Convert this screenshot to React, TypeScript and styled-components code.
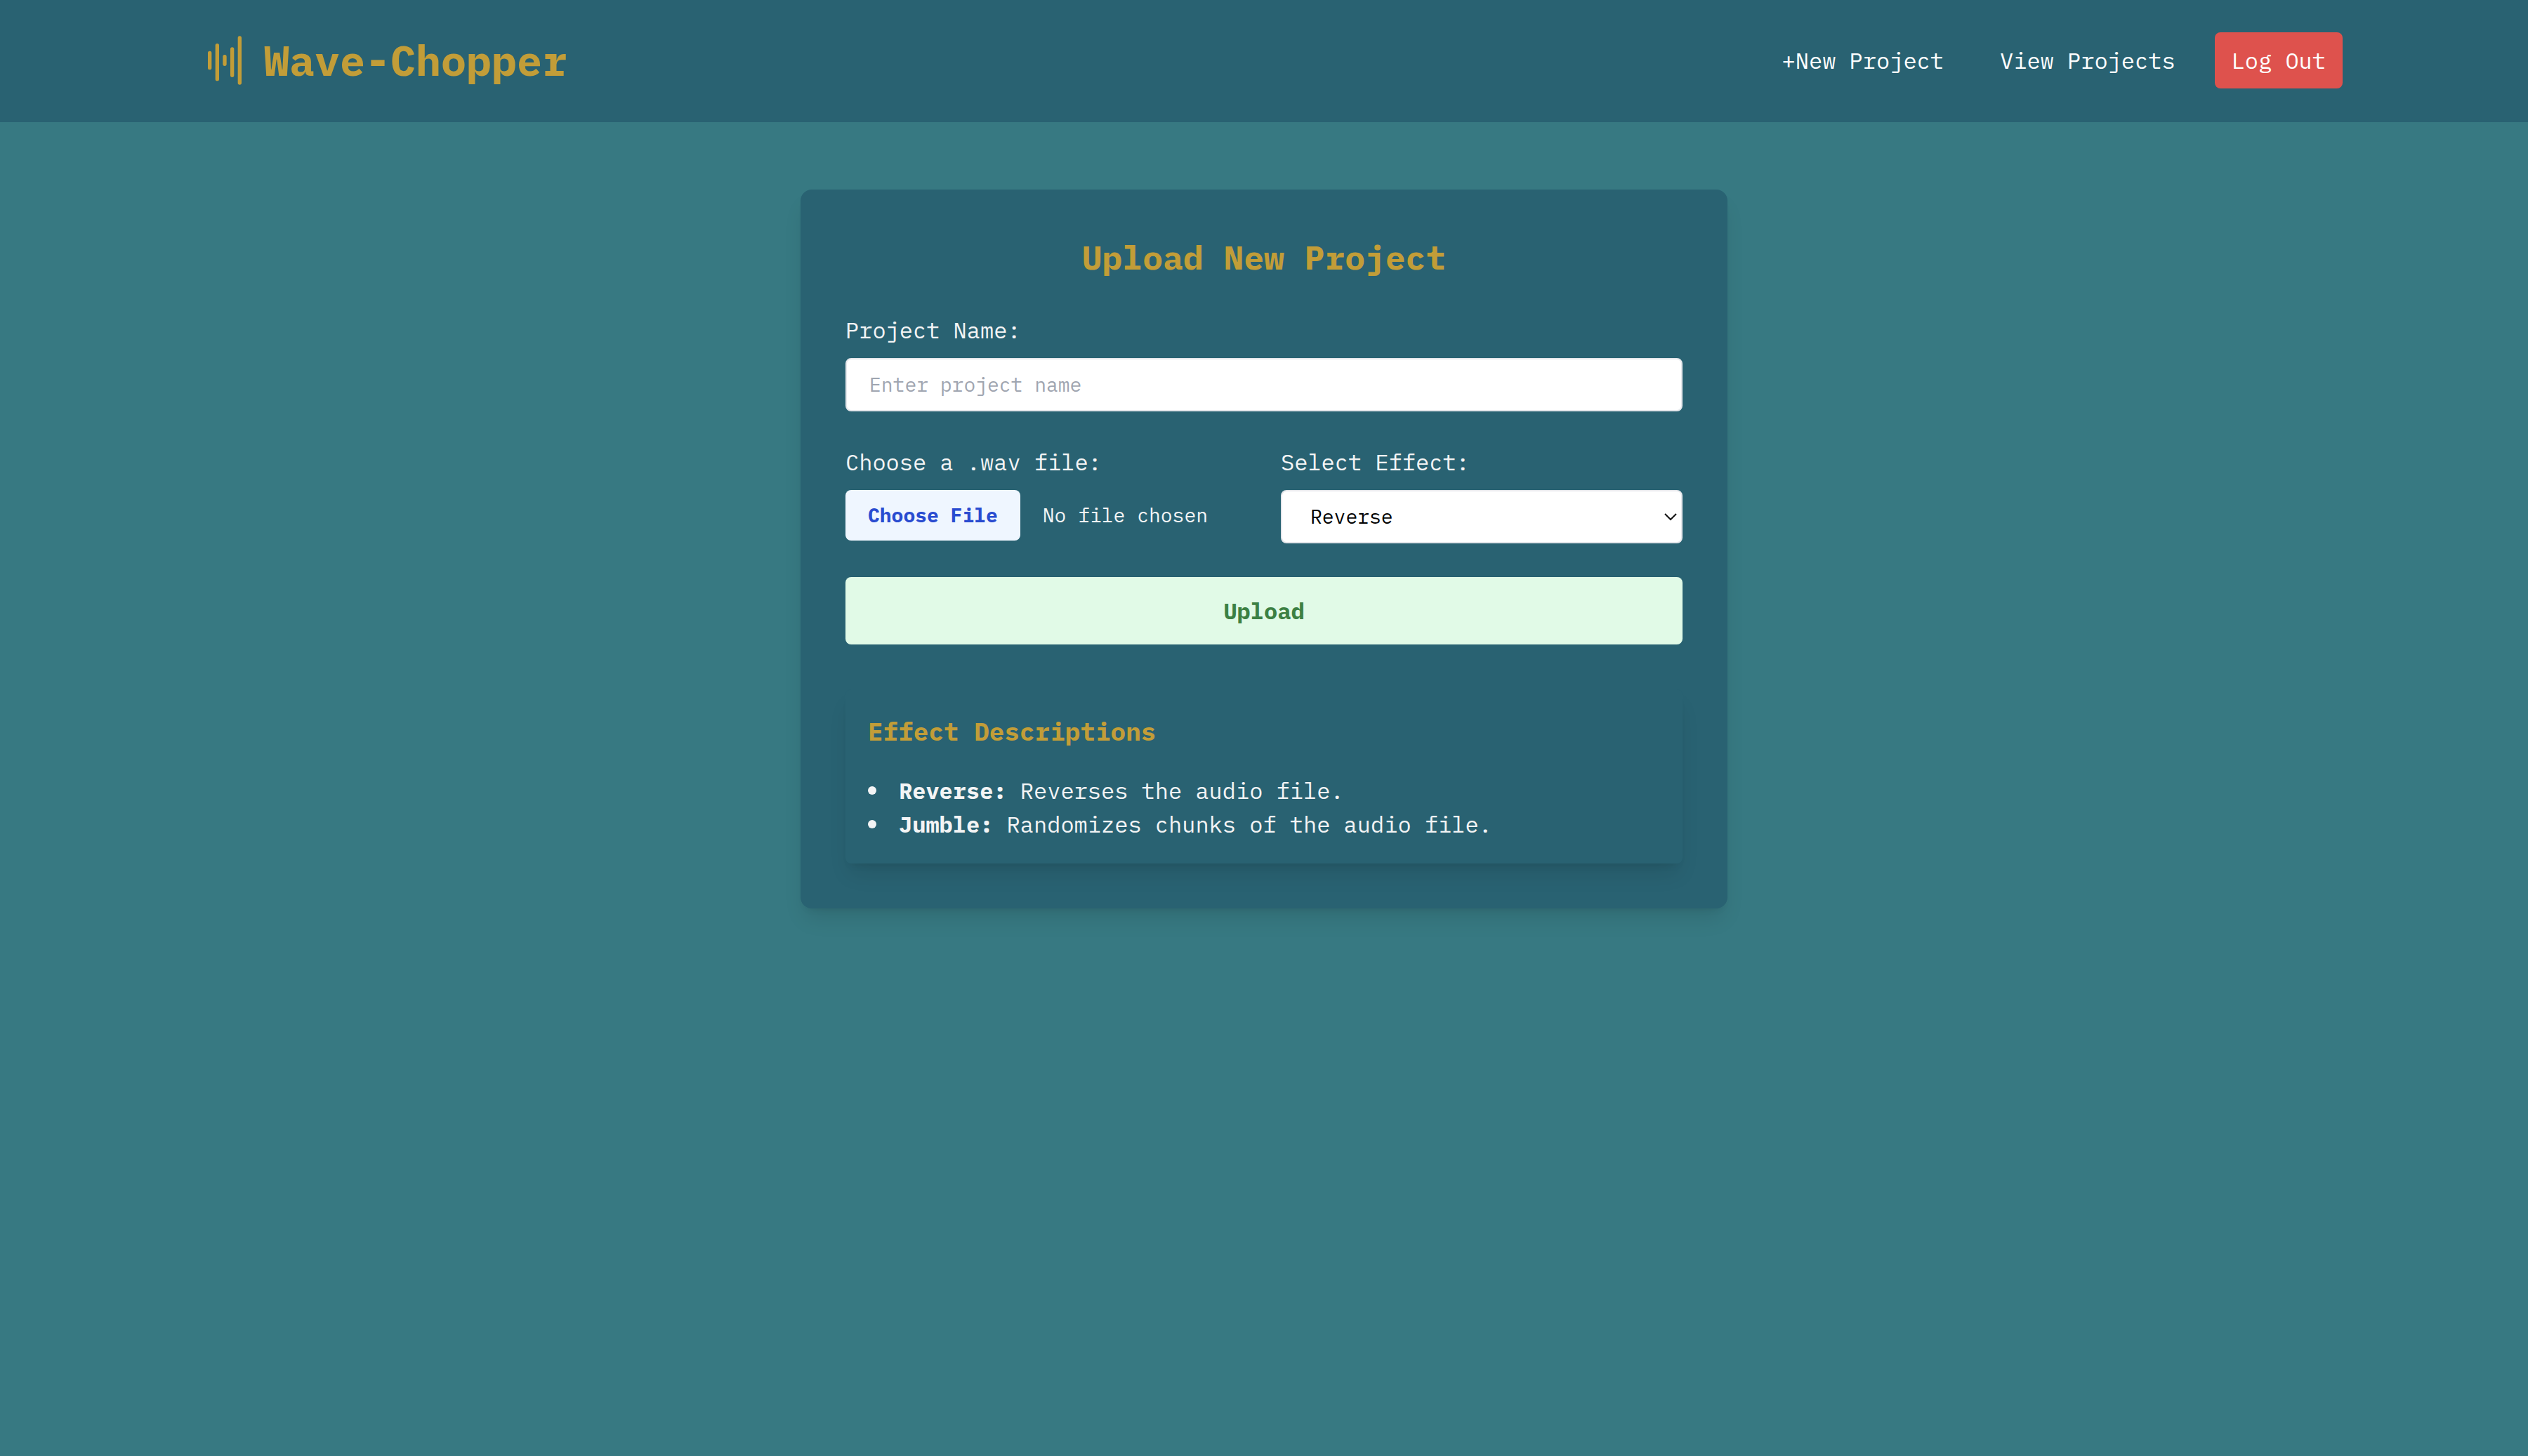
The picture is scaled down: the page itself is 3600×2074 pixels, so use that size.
import React, { useState } from "react";
import styled, { createGlobalStyle, ThemeProvider } from "styled-components";

const theme = {
  page: "#377982",
  panel: "#296272",
  gold: "#c29d38",
  text: "#f3f4f5",
  danger: "#de524d",
  border: "#e5e7eb",
};

const elevation =
  "0 20px 30px -6px rgba(0, 0, 0, 0.1), 0 8px 12px -8px rgba(0, 0, 0, 0.1)";

const GlobalStyle = createGlobalStyle`
  *, *::before, *::after {
    box-sizing: border-box;
  }
  body {
    margin: 0;
    min-height: 100vh;
    background: ${theme.page};
    color: ${theme.text};
    font-family: "IBM Plex Mono", "Liberation Mono", monospace;
    font-size: 32px;
    line-height: 48px;
  }
  h1, h2, h3, ul {
    margin: 0;
    padding: 0;
  }
  button, input, select {
    margin: 0;
    font: inherit;
  }
`;

const Header = styled.header`
  background: ${(p) => p.theme.panel};
  padding: 46px 0 48px;
`;

const HeaderInner = styled.div`
  display: flex;
  align-items: center;
  justify-content: space-between;
  width: 100%;
  max-width: 3072px;
  margin: 0 auto;
`;

const Brand = styled.a`
  display: flex;
  align-items: center;
  gap: 24px;
  padding-left: 24px;
  color: ${(p) => p.theme.gold};
  text-decoration: none;
`;

const BrandMark = styled.svg`
  width: 64px;
  height: 64px;
  overflow: visible;
`;

const BrandName = styled.h1`
  font-size: 60px;
  line-height: 72px;
  font-weight: 700;
`;

const Nav = styled.nav`
  display: flex;
  align-items: center;
  gap: 32px;
`;

const NavLink = styled.a`
  padding: 16px 24px;
  color: #fff;
  text-decoration: none;
`;

const LogOut = styled.button`
  padding: 16px 24px;
  border: 0;
  border-radius: 8px;
  background: ${(p) => p.theme.danger};
  color: #fff;
  cursor: pointer;
`;

const Card = styled.main`
  width: 100%;
  max-width: 1320px;
  margin: 96px auto;
  padding: 64px;
  border-radius: 16px;
  background: ${(p) => p.theme.panel};
  box-shadow: ${elevation};
`;

const CardTitle = styled.h2`
  margin-bottom: 48px;
  color: ${(p) => p.theme.gold};
  font-size: 48px;
  line-height: 64px;
  font-weight: 700;
  text-align: center;
`;

const Form = styled.form`
  display: flex;
  flex-direction: column;
  gap: 48px;
`;

const FieldRow = styled.div`
  display: grid;
  grid-template-columns: 1fr 1fr;
  gap: 48px;
`;

const Field = styled.div`
  display: flex;
  flex-direction: column;
  gap: 16px;
  min-width: 0;
`;

const TextInput = styled.input`
  width: 100%;
  padding: 16px 32px;
  border: 2px solid ${(p) => p.theme.border};
  border-radius: 8px;
  background: #fff;
  color: #000;
  font-size: 28px;
  line-height: 40px;
  &::placeholder {
    color: #9fa5b0;
    opacity: 1;
  }
`;

const FileInput = styled.input`
  width: 100%;
  color: ${(p) => p.theme.text};
  font-size: 28px;
  line-height: 40px;
  &::file-selector-button {
    margin-right: 32px;
    padding: 16px 32px;
    border: 0;
    border-radius: 8px;
    background: #eff6ff;
    color: #294bd0;
    font: inherit;
    font-weight: 700;
  }
`;

const SelectBox = styled.div`
  display: grid;
  align-items: center;
  > * {
    grid-area: 1 / 1;
  }
`;

const Select = styled.select`
  appearance: none;
  width: 100%;
  height: 76px;
  padding: 0 40px;
  border: 2px solid ${(p) => p.theme.border};
  border-radius: 8px;
  background: #fff;
  color: #000;
  font-size: 28px;
`;

const Chevron = styled.svg`
  justify-self: end;
  width: 18px;
  height: 12px;
  margin-right: 8px;
  pointer-events: none;
`;

const Upload = styled.button`
  padding: 24px;
  border: 0;
  border-radius: 8px;
  background: #e1fae7;
  color: #3c8043;
  font-weight: 700;
  cursor: pointer;
`;

const Descriptions = styled.section`
  margin-top: 64px;
  padding: 32px;
  border-radius: 8px;
  background: ${(p) => p.theme.panel};
  box-shadow: ${elevation};
`;

const DescriptionsTitle = styled.h3`
  margin-bottom: 32px;
  color: ${(p) => p.theme.gold};
  font-size: 36px;
  line-height: 56px;
  font-weight: 700;
`;

const EffectList = styled.ul`
  list-style: none;
`;

const Effect = styled.li`
  display: flex;
  align-items: center;
  gap: 32px;
  &::before {
    content: "";
    flex: none;
    width: 12px;
    height: 12px;
    border-radius: 50%;
    background: currentColor;
  }
`;

const effects = [
  { name: "Reverse", text: "Reverses the audio file." },
  { name: "Jumble", text: "Randomizes chunks of the audio file." },
];

export default function App() {
  const [name, setName] = useState("");
  const [effect, setEffect] = useState("Reverse");

  return (
    <ThemeProvider theme={theme}>
      <GlobalStyle />
      <Header>
        <HeaderInner>
          <Brand href="#">
            <BrandMark
              viewBox="0 0 24 24"
              fill="none"
              stroke="currentColor"
              strokeWidth="2"
              strokeLinecap="round"
              aria-hidden="true"
            >
              <path d="M4 8v8M8 4v18M12 10v4M16 6v14M20 0v24" />
            </BrandMark>
            <BrandName>Wave-Chopper</BrandName>
          </Brand>
          <Nav>
            <NavLink href="#new">+New Project</NavLink>
            <NavLink href="#projects">View Projects</NavLink>
            <LogOut type="button">Log Out</LogOut>
          </Nav>
        </HeaderInner>
      </Header>

      <Card>
        <CardTitle>Upload New Project</CardTitle>
        <Form onSubmit={(e) => e.preventDefault()}>
          <Field>
            <label htmlFor="project-name">Project Name:</label>
            <TextInput
              id="project-name"
              type="text"
              placeholder="Enter project name"
              value={name}
              onChange={(e) => setName(e.target.value)}
            />
          </Field>
          <FieldRow>
            <Field>
              <label htmlFor="wav-file">Choose a .wav file:</label>
              <FileInput id="wav-file" type="file" accept=".wav" />
            </Field>
            <Field>
              <label htmlFor="effect">Select Effect:</label>
              <SelectBox>
                <Select
                  id="effect"
                  value={effect}
                  onChange={(e) => setEffect(e.target.value)}
                >
                  {effects.map((item) => (
                    <option key={item.name}>{item.name}</option>
                  ))}
                </Select>
                <Chevron
                  viewBox="0 0 18 12"
                  fill="none"
                  stroke="#111"
                  strokeWidth="2"
                  aria-hidden="true"
                >
                  <path d="M1 2l8 8 8-8" />
                </Chevron>
              </SelectBox>
            </Field>
          </FieldRow>
          <Upload type="submit">Upload</Upload>
        </Form>

        <Descriptions>
          <DescriptionsTitle>Effect Descriptions</DescriptionsTitle>
          <EffectList>
            {effects.map((item) => (
              <Effect key={item.name}>
                <span>
                  <strong>{item.name}:</strong> {item.text}
                </span>
              </Effect>
            ))}
          </EffectList>
        </Descriptions>
      </Card>
    </ThemeProvider>
  );
}
